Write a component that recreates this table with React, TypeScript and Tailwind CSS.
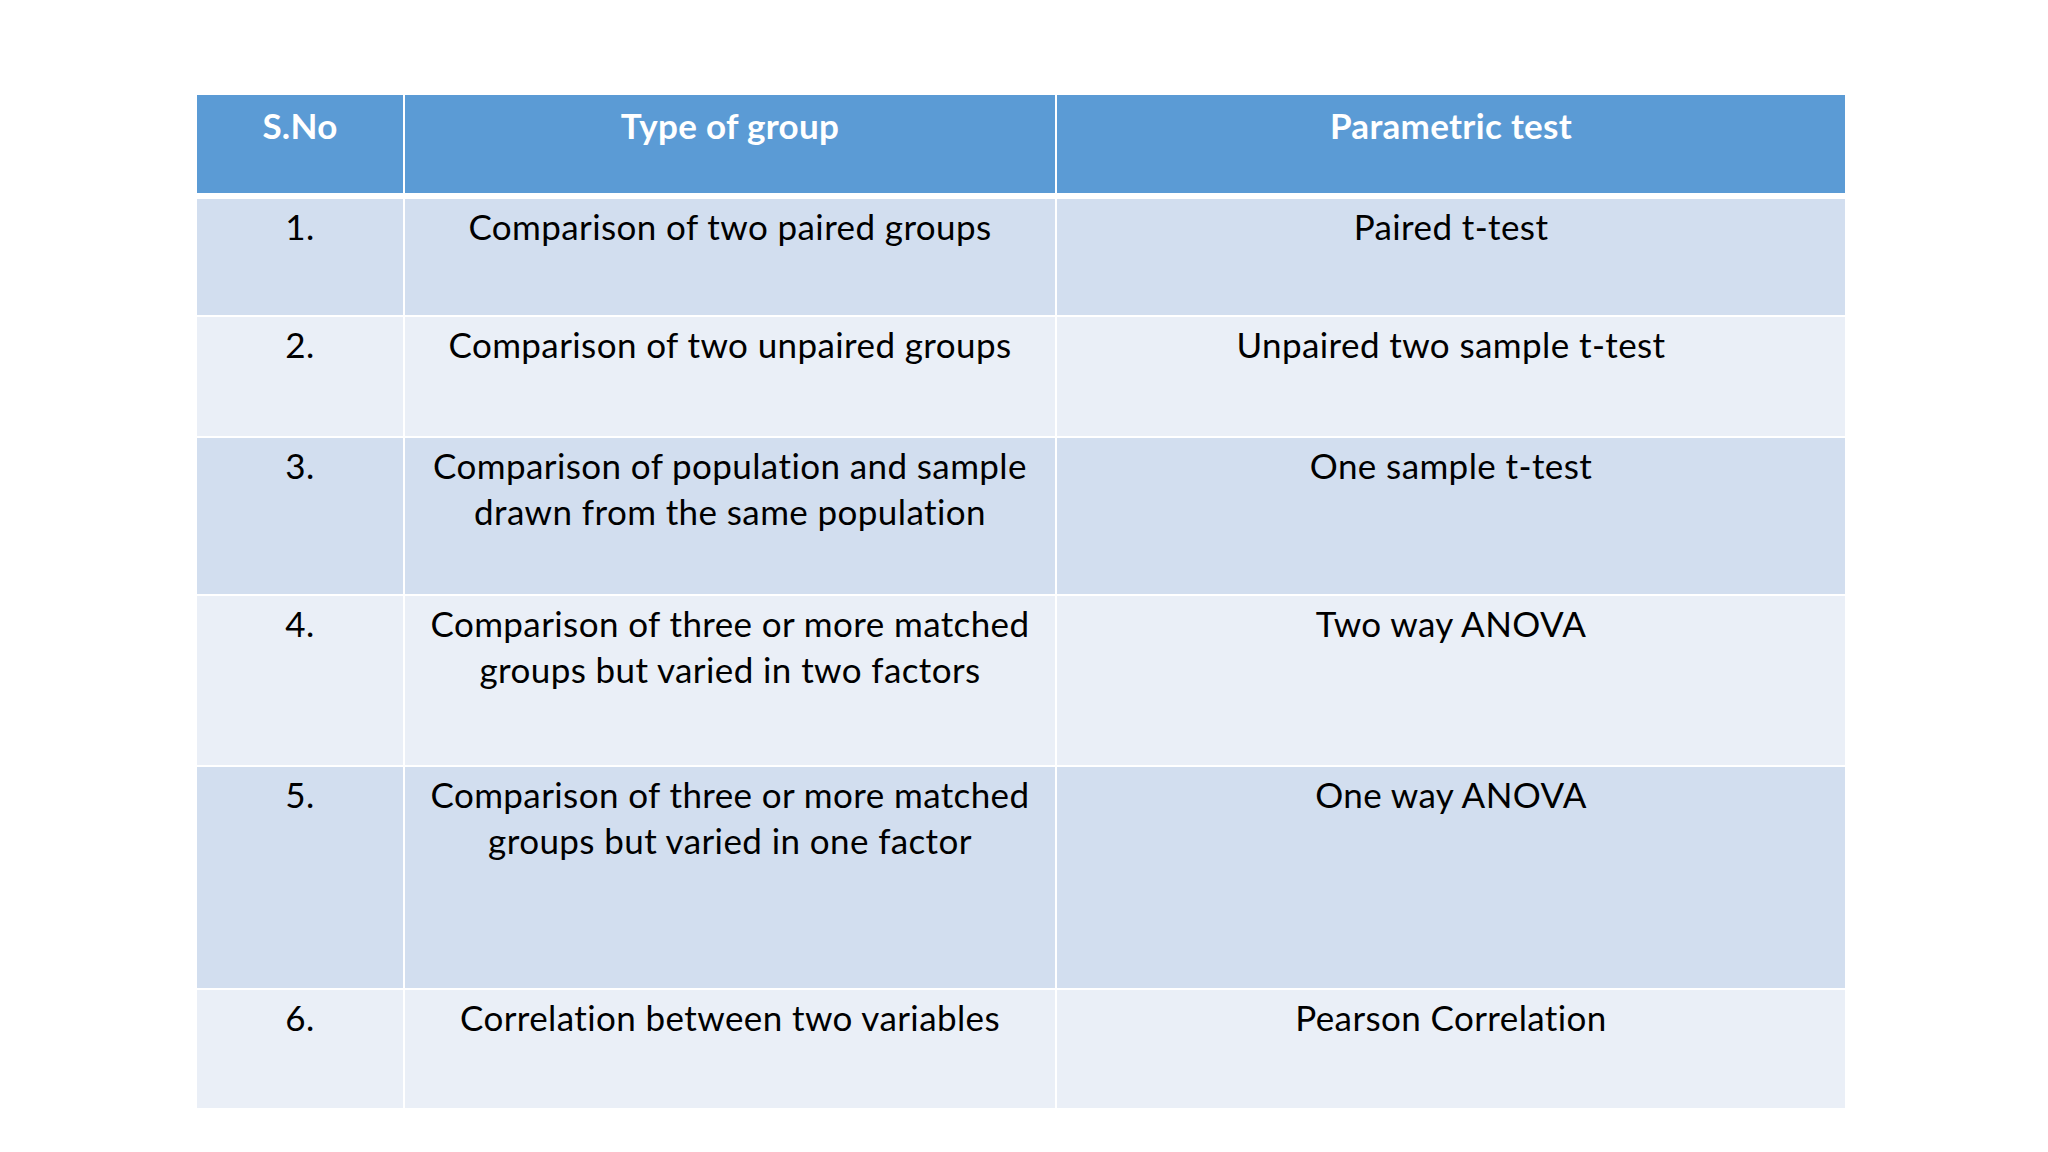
const ROWS = [
  { no: "1.", group: ["Comparison of two paired groups"], test: "Paired t-test", h: "h-[116px]" },
  { no: "2.", group: ["Comparison of two unpaired groups"], test: "Unpaired two sample t-test", h: "h-[119px]" },
  {
    no: "3.",
    group: ["Comparison of population and sample", "drawn from the same population"],
    test: "One sample t-test",
    h: "h-[156px]",
  },
  {
    no: "4.",
    group: ["Comparison of three or more matched", "groups but varied in two factors"],
    test: "Two way ANOVA",
    h: "h-[169px]",
  },
  {
    no: "5.",
    group: ["Comparison of three or more matched", "groups but varied in one factor"],
    test: "One way ANOVA",
    h: "h-[221px]",
  },
  { no: "6.", group: ["Correlation between two variables"], test: "Pearson Correlation", h: "h-[118px]" },
];

export default function App() {
  return (
    <div className="h-[1152px] w-[2048px] bg-white pl-[197px] pt-[95px] font-['Lato','Open_Sans',sans-serif] text-[35px] leading-[46px] text-black">
      <div className="flex w-[1648px] flex-col">
        {/* Header */}
        <div className="grid h-[98px] grid-cols-[206px_650px_788px] gap-x-[2px] font-bold tracking-[0.3px] text-white">
          <div className="bg-[#5b9bd5] pt-[7px] text-center">S.No</div>
          <div className="bg-[#5b9bd5] pt-[7px] text-center">Type of group</div>
          <div className="bg-[#5b9bd5] pt-[7px] text-center">Parametric test</div>
        </div>

        <div className="mt-[6px] flex flex-col gap-y-[2px] tracking-[0.4px]">
          {ROWS.map((row, i) => {
            const bg = i % 2 === 0 ? "bg-[#d2deef]" : "bg-[#eaeff7]";
            return (
              <div
                key={row.no}
                className={`grid grid-cols-[206px_650px_788px] gap-x-[2px] ${row.h}`}
              >
                <div className={`${bg} pt-[4px] text-center`}>{row.no}</div>
                <div className={`${bg} pt-[4px] text-center`}>
                  {row.group.map((line) => (
                    <div key={line}>{line}</div>
                  ))}
                </div>
                <div className={`${bg} pt-[4px] text-center`}>{row.test}</div>
              </div>
            );
          })}
        </div>
      </div>
    </div>
  );
}
